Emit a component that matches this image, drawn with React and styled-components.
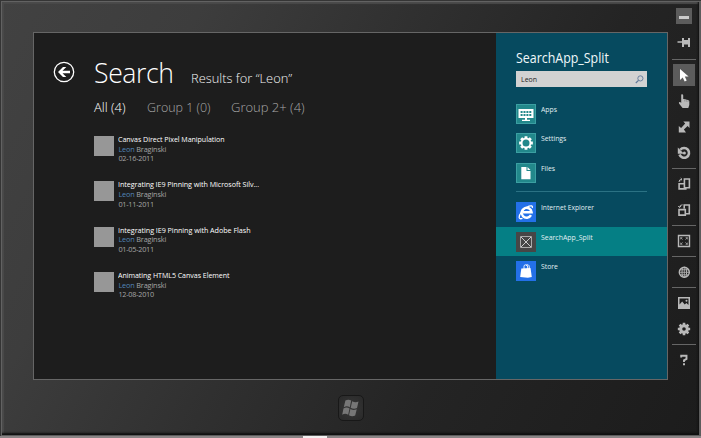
import React from "react";
import styled, { createGlobalStyle, css } from "styled-components";

const GlobalStyle = createGlobalStyle`
  html, body { margin: 0; width: 701px; height: 438px; overflow: hidden; background: #777; }
  * { box-sizing: border-box; }
  body { font-family: "Open Sans", "Noto Sans", sans-serif; }
`;

const Tablet = styled.div`
  width: 701px;
  height: 436px;
  display: grid;
  grid-template-columns: 635px 1fr;
  padding-left: 33px;
  background: linear-gradient(118deg, #424242 0%, #3d3d3d 22%, #303030 45%, #242424 68%, #1c1c1c 100%);
  box-shadow: inset 1px 1px 0 #353535, inset 2px 2px 0 #626262, inset -2px -1px 0 #5c5c5c,
    inset -3px -3px 2px #101010, inset 4px 4px 1px #4a4a4a;
`;

const Base = styled.div`
  height: 2px;
  padding-left: 303px;
  background: #8a8586;
`;

const BaseHighlight = styled.div`
  width: 24px;
  height: 2px;
  background: #f2f0f0;
`;

const Device = styled.div`
  display: flex;
  flex-direction: column;
  align-items: center;
  padding-top: 32px;
`;

const Screen = styled.div`
  width: 635px;
  height: 348px;
  display: grid;
  grid-template-columns: 462px 1fr;
  border: 1px solid #666;
  background: #1d1d1d;
`;

const HomeButton = styled.div`
  width: 26px;
  height: 26px;
  margin-top: 15px;
  display: grid;
  place-items: center;
  border: 1px solid #181818;
  border-radius: 5px;
  background: radial-gradient(#383838, #292929);
`;

const Text = styled.span`
  display: block;
  margin: 0;
  white-space: nowrap;
  font-size: ${(p) => p.$size}px;
  line-height: ${(p) => p.$line}px;
  font-weight: ${(p) => p.$weight || 400};
  letter-spacing: ${(p) => p.$track || 0}px;
  color: ${(p) => p.$color || "#e4e4e4"};
  transform-origin: left;
  ${(p) => p.$stretch && css`transform: scaleX(${p.$stretch});`}
`;

const Main = styled.main`
  padding: 20px 0 0 19px;
  display: grid;
  grid-template-columns: 41px 1fr;
  align-content: start;
`;

const BackButton = styled.div`
  padding-top: 8px;
  svg { display: block; }
`;

const Heading = styled.header`
  height: 42px;
  display: flex;
  align-items: baseline;
  gap: 13.5px;
`;

const Tabs = styled.nav`
  display: flex;
  padding-top: 1px;
  height: 40px;
`;

const Tab = styled.div`
  width: ${(p) => p.$width}px;
`;

const Results = styled.ul`
  list-style: none;
  margin: 0;
  padding: 0;
`;

const Result = styled.li`
  height: 45.4px;
  display: flex;
  gap: 4.4px;
`;

const Thumb = styled.div`
  width: 20px;
  height: 20px;
  margin-top: 1px;
  background: #979797;
`;

const Match = styled.span`
  color: #5285b8;
`;

const Panel = styled.aside`
  background: #064a5f;
`;

const PanelHead = styled.div`
  padding: 15px 20px 0 20px;
  height: 65.6px;
`;

const SearchBox = styled.div`
  height: 16px;
  margin-top: 3px;
  padding: 0 3px 0 4.5px;
  display: flex;
  align-items: center;
  justify-content: space-between;
  background: #d2d2d2;
`;

const AppRow = styled.div`
  height: 29.5px;
  padding: 5px 0 0 20px;
  display: flex;
  gap: 4.5px;
  ${(p) => p.$selected && css`background: #057f85;`}
`;

const Tile = styled.div`
  width: 20px;
  height: 20px;
  display: grid;
  place-items: center;
  background: ${(p) => p.$color};
  border: 1px solid ${(p) => p.$edge || p.$color};
  svg { display: block; }
`;

const Rule = styled.div`
  height: 1px;
  margin: 4px 20px 5px 20px;
  background: #2b7284;
`;

const Toolbar = styled.div`
  padding: 8px 5px 0 4px;
  display: flex;
  flex-direction: column;
  align-items: center;
`;

const Tool = styled.div`
  flex: none;
  width: ${(p) => p.$width || 24}px;
  height: ${(p) => p.$height || 26}px;
  margin: ${(p) => p.$margin || 0};
  display: grid;
  place-items: center;
  background: ${(p) => (p.$active ? "#5c5c5c" : "transparent")};
  svg { display: block; }
`;

const Divider = styled.div`
  flex: none;
  width: 24px;
  height: 1px;
  margin: 2px 0;
  background: #666;
`;

const Icon = ({ size = 16, children }) => (
  <svg width={size} height={size} viewBox={`0 0 ${size} ${size}`} fill="none">{children}</svg>
);

const G = "#b9b9b9";

const gearPoints = (c, outer, inner) => {
  const pts = [];
  for (let i = 0; i < 8; i++) {
    [[-0.29, inner], [-0.2, outer], [0.2, outer], [0.29, inner]].forEach(([d, r]) => {
      const a = (i * Math.PI) / 4 + d;
      pts.push(`${(c + r * Math.sin(a)).toFixed(2)},${(c - r * Math.cos(a)).toFixed(2)}`);
    });
  }
  return `M${pts.join("L")}Z`;
};
const ring = (c, r) => `M${c - r} ${c}a${r} ${r} 0 1 0 ${2 * r} 0a${r} ${r} 0 1 0 ${-2 * r} 0Z`;

const BackIcon = () => (
  <Icon size={22}>
    <circle cx="11" cy="11" r="9.7" stroke="#fff" strokeWidth="1.3" />
    <path d="M5 11 10 6h3.3L9.5 9.7H17v2.6H9.5l3.8 3.7H10Z" fill="#fff" />
  </Icon>
);

const WindowsIcon = () => (
  <Icon size={20}>
    <g fill="#777">
      <path d="M4.4 2.6q3-1.8 5.8 0L8.8 9.2q-3-1.7-6 0Z" />
      <path d="M11.2 3.2q3 1.8 6.3.4l-1.5 6.3q-3 1.6-6.3-.1Z" />
      <path d="M2.5 10.4q3-1.7 6 0l-1.3 6.3q-3-1.7-6 0Z" />
      <path d="M9.4 11q3 1.7 6.3.2l-1.5 6.2q-3 1.6-6.2-.2Z" />
    </g>
  </Icon>
);

const AppsIcon = () => (
  <Icon size={18}>
    <path d="M1.5 4h15v9h-15Z" fill="#fff" />
    <path d="M3.6 6h2v2h-2ZM6.5 6h2v2h-2ZM9.4 6h2v2h-2ZM12.3 6h2v2h-2ZM3.6 9h2v2h-2ZM6.5 9h2v2h-2ZM9.4 9h2v2h-2ZM12.3 9h2v2h-2Z" fill="#22888b" />
    <path d="M8 13h2v1.8h3V16H5v-1.2h3Z" fill="#fff" />
  </Icon>
);

const SettingsIcon = () => (
  <Icon size={18}>
    <path d={gearPoints(9, 7, 5.3) + ring(9, 3.5)} fill="#fff" fillRule="evenodd" />
  </Icon>
);

const FilesIcon = () => (
  <Icon size={18}>
    <path d="M4.3 3h5.2v4h4v8.3H4.3ZM10.5 3l3 3h-3Z" fill="#fff" />
  </Icon>
);

const ExplorerIcon = () => (
  <Icon size={18}>
    <path d="M14 12.2a5 5 0 1 1 .6-3H6" stroke="#fff" strokeWidth="2.4" />
    <path d="M5.5 15.3C1.4 17 1 13.5 4.4 9.1 9 3.2 16.5.6 15.3 5" stroke="#fff" strokeWidth="1.3" />
  </Icon>
);

const PlaceholderIcon = () => (
  <Icon size={18}>
    <path d="M3.5 3.5h11v11h-11Z" stroke="#aaa" />
    <path d="m4 4 10 10M14 4 4 14" stroke="#ccc" />
  </Icon>
);

const StoreIcon = () => (
  <Icon size={18}>
    <path d="m4.3 6.6 9.2-.6 1.3 9-4 .8-7.6-.7Z" fill="#fff" />
    <path d="M7 7V4.4q0-1.6 1.7-1.6Q10.5 2.7 10.7 5v2M9 3.5q2.8-2 3.3 1.4V7" stroke="#fff" strokeWidth=".9" />
  </Icon>
);

const SearchIcon = () => (
  <Icon size={9}>
    <circle cx="5.4" cy="3.4" r="2.6" stroke="#60789a" strokeWidth=".9" />
    <path d="M3.5 5.3.8 8" stroke="#60789a" strokeWidth="1.2" />
  </Icon>
);

const MinimizeIcon = () => <Icon><path d="M3 8h10v3H3Z" fill="#ccc" /></Icon>;
const PinIcon = () => <Icon><path d="M1.5 8H7" stroke={G} strokeWidth="1.5" /><path d="M6 4h2v2h4V4h2v9h-2v-2.5H8V13H6Z" fill={G} /></Icon>;
const PointerIcon = () => <Icon><path d="M4 2v11l2.7-2.6L8.7 14.6l2-1L8.8 9.5h3.8Z" fill="#fff" /></Icon>;
const HandIcon = () => (
  <Icon>
    <path d="M5.2 1.5q1.7-.8 2 .8V6h1.5v.4q1.4-.5 1.7.4 1.3-.4 1.6.5 1.3-.1 1.3 1V12l-1 3H6.6L3 10.5q-.6-2 1.2-1.4l1 .9Z" fill={G} />
    <path d="M8.8 6.8v1.7M10.4 7.2v1.5M12 7.8v1.2" stroke="#555" strokeWidth=".4" />
  </Icon>
);
const ExpandIcon = () => <Icon><path d="M7.3 2.5h6.2V9L11.6 7 7.9 10.6 10 13.5H2.8V7l2.3 2L9.2 4.5Z" fill={G} /></Icon>;
const RotateIcon = () => (
  <Icon>
    <path d="M4.3 4.8A4.9 4.9 0 1 1 3.5 9.5" stroke={G} strokeWidth="2.6" />
    <path d="M1.8 2.6v6.2h6.2Z" fill={G} />
    <circle cx="8.4" cy="8" r="1.5" fill={G} />
  </Icon>
);
const TurnRightIcon = () => (
  <Icon>
    <path d="M8.4 3h5v8.7h-5ZM8.2 7.8H3.1v5.1h6.7v-1.2" stroke={G} strokeWidth="1.6" />
    <path d="M3 6q0-2.7 2.8-2.7M4.7 2.1 6 3.3 4.7 4.6" stroke={G} />
  </Icon>
);
const TurnLeftIcon = () => (
  <Icon>
    <path d="M8.2 6.5V3h5.1v8.8h-3.2M3 7.6h6.3v5.5H3Z" stroke={G} strokeWidth="1.6" />
    <path d="M6.6 2.8q-3 0-3 2.5M2.2 4l1.4 1.5L5 4" stroke={G} />
  </Icon>
);
const ResolutionIcon = () => (
  <Icon>
    <path d="M2.5 2.5h11v11h-11Z" stroke={G} strokeWidth="1.4" />
    <path d="m4.6 4.6 2 2m4.8-2-2 2m-4.8 4.8 2-2m4.8 2-2-2M4.7 6.4V4.7h1.7m3.2 0h1.7v1.7M4.7 9.6v1.7h1.7m3.2 0h1.7V9.6" stroke={G} strokeWidth=".7" />
  </Icon>
);
const GlobeIcon = () => (
  <Icon>
    <circle cx="8.3" cy="8.3" r="5" stroke={G} strokeWidth="1.4" />
    <ellipse cx="8.3" cy="8.3" rx="2.3" ry="5" stroke={G} />
    <path d="M8.3 3v10.5M3 8.3h10.5M4 5.8h8.6M4 10.8h8.6" stroke={G} strokeWidth=".8" />
  </Icon>
);
const PictureIcon = () => (
  <Icon>
    <path d="M2 2h12v12H2ZM3.5 3.5v6l2.7-3 2.5 3 1.7-1.6 2.1 2V3.5Z" fill={G} fillRule="evenodd" />
    <circle cx="10.5" cy="5.7" r="1" fill={G} />
  </Icon>
);
const GearIcon = () => <Icon><path d={gearPoints(8, 6.3, 4.8) + ring(8, 1.8)} fill={G} fillRule="evenodd" /></Icon>;
const HelpIcon = () => <Icon><path d="M5.2 5.6V3.7h5.3v3.2L8 8.3v1.8" stroke={G} strokeWidth="1.9" /><path d="M7 11.3h2v2H7Z" fill={G} /></Icon>;

const results = [
  ["Canvas Direct Pixel Manipulation", "02-16-2011", 0.97],
  ["Integrating IE9 Pinning with Microsoft Silv...", "01-11-2011", 0.98],
  ["Integrating IE9 Pinning with Adobe Flash", "01-05-2011", 0.985],
  ["Animating HTML5 Canvas Element", "12-08-2010", 0.97],
];

const AppEntry = ({ label, icon, color, edge, selected, stretch = 0.9 }) => (
  <AppRow $selected={selected}>
    <Tile $color={color} $edge={edge}>{icon}</Tile>
    <Text $size={7.6} $line={11} $stretch={stretch} $color="#e2f0f3">{label}</Text>
  </AppRow>
);

export default function App() {
  return (
    <>
      <GlobalStyle />
      <Tablet>
        <Device>
          <Screen>
            <Main>
              <BackButton><BackIcon /></BackButton>
              <div>
                <Heading>
                  <Text as="h1" $size={28} $line={38} $weight={300} $stretch={0.95} $track={-0.4} $color="#fff">Search</Text>
                  <Text $size={13} $line={20} $weight={300} $stretch={0.99} $color="#f4f4f4">Results for “Leon”</Text>
                </Heading>
                <Tabs>
                  <Tab $width={53}><Text $size={13} $line={22} $weight={300} $color="#fff">All (4)</Text></Tab>
                  <Tab $width={84}><Text $size={13} $line={22} $weight={300} $stretch={0.96} $color="#a8a8a8">Group 1 (0)</Text></Tab>
                  <Tab $width={90}><Text $size={13} $line={22} $weight={300} $color="#a8a8a8">Group 2+ (4)</Text></Tab>
                </Tabs>
                <Results>
                  {results.map(([title, date, stretch]) => (
                    <Result key={title}>
                      <Thumb />
                      <div>
                        <Text $size={7.3} $line={9.6} $track={-0.05} $stretch={stretch} $color="#fff">{title}</Text>
                        <Text $size={7.3} $line={9.6} $track={-0.15} $color="#a6a6a6"><Match>Leon</Match> Braginski</Text>
                        <Text $size={7.3} $line={9.6} $track={-0.25} $color="#a6a6a6">{date}</Text>
                      </div>
                    </Result>
                  ))}
                </Results>
              </div>
            </Main>
            <Panel>
              <PanelHead>
                <Text $size={13.8} $line={20} $stretch={0.9} $color="#f0f8fa">SearchApp_Split</Text>
                <SearchBox>
                  <Text $size={7.5} $line={14} $stretch={0.93} $color="#222">Leon</Text>
                  <SearchIcon />
                </SearchBox>
              </PanelHead>
              <AppEntry label="Apps" icon={<AppsIcon />} color="#22888b" edge="#3b9fa2" />
              <AppEntry label="Settings" icon={<SettingsIcon />} color="#22888b" edge="#3b9fa2" />
              <AppEntry label="Files" icon={<FilesIcon />} color="#22888b" edge="#3b9fa2" />
              <Rule />
              <AppEntry label="Internet Explorer" icon={<ExplorerIcon />} color="#2370e8" stretch={0.88} />
              <AppEntry label="SearchApp_Split" icon={<PlaceholderIcon />} color="#464646" selected stretch={0.91} />
              <AppEntry label="Store" icon={<StoreIcon />} color="#2370e8" />
            </Panel>
          </Screen>
          <HomeButton><WindowsIcon /></HomeButton>
        </Device>
        <Toolbar>
          <Tool $width={16} $height={16} $active><MinimizeIcon /></Tool>
          <Tool $height={30} $margin="3px 0 0"><PinIcon /></Tool>
          <Divider />
          <Tool $width={22} $height={22} $margin="2px 0" $active><PointerIcon /></Tool>
          <Tool><HandIcon /></Tool>
          <Tool><ExpandIcon /></Tool>
          <Tool><RotateIcon /></Tool>
          <Divider />
          <Tool><TurnRightIcon /></Tool>
          <Tool><TurnLeftIcon /></Tool>
          <Divider />
          <Tool><ResolutionIcon /></Tool>
          <Divider />
          <Tool><GlobeIcon /></Tool>
          <Divider />
          <Tool><PictureIcon /></Tool>
          <Tool><GearIcon /></Tool>
          <Divider />
          <Tool><HelpIcon /></Tool>
        </Toolbar>
      </Tablet>
      <Base><BaseHighlight /></Base>
    </>
  );
}
